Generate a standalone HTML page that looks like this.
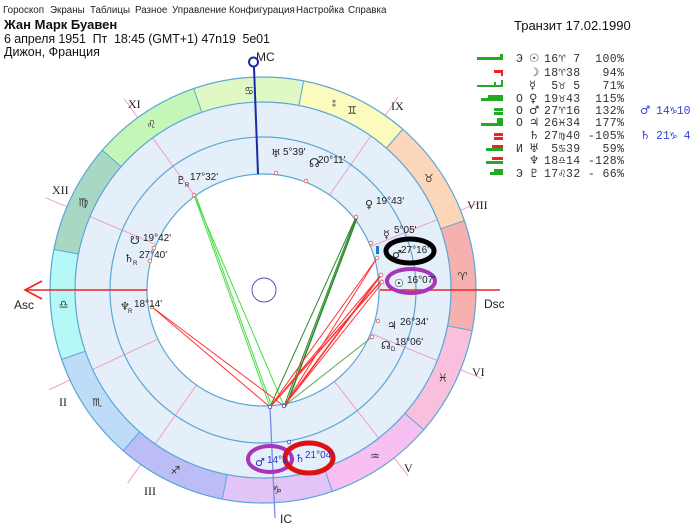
<!DOCTYPE html>
<html><head><meta charset="utf-8"><style>
html,body{margin:0;padding:0;background:#fff;width:700px;height:527px;overflow:hidden}
svg{display:block}
text{font-family:"Liberation Sans","DejaVu Sans",sans-serif;white-space:pre}
text.g,.g text{font-family:"DejaVu Sans",sans-serif}
.m text{font-family:"Liberation Mono","DejaVu Sans Mono",monospace;font-size:11.5px}
.m text.g{font-family:"DejaVu Sans",sans-serif}
.pl{font-size:10px;fill:#222}
text.rn{font-family:"Liberation Serif",serif;font-size:12px;fill:#222}
</style></head><body>
<svg width="700" height="527" viewBox="0 0 700 527" xmlns="http://www.w3.org/2000/svg" xml:space="preserve">
<g font-size="9.8" fill="#222">
<text x="3" y="13">Гороскоп</text><text x="50" y="13">Экраны</text><text x="90" y="13">Таблицы</text><text x="135" y="13">Разное</text><text x="172" y="13">Управление</text><text x="229" y="13">Конфигурация</text><text x="296" y="13">Настройка</text><text x="348" y="13">Справка</text>
</g>
<text x="4" y="29" font-size="13" font-weight="bold" fill="#111">Жан Марк Буавен</text>
<text x="4" y="43" font-size="12.5" fill="#111" textLength="266" lengthAdjust="spacing">6 апреля 1951  Пт  18:45 (GMT+1) 47n19  5e01</text>
<text x="4" y="56" font-size="12.5" fill="#111">Дижон, Франция</text>
<text x="514" y="30" font-size="13" fill="#111">Транзит 17.02.1990</text>

<g stroke="#f0a0c8" stroke-width="1" transform="translate(263,290)">
<line x1="116" y1="0" x2="236" y2="0" transform="rotate(-157)"/>
<line x1="116" y1="0" x2="236" y2="0" transform="rotate(-126)"/>
<line x1="116" y1="0" x2="236" y2="0" transform="rotate(-55)"/>
<line x1="116" y1="0" x2="236" y2="0" transform="rotate(-22)"/>
<line x1="116" y1="0" x2="236" y2="0" transform="rotate(22)"/>
<line x1="116" y1="0" x2="236" y2="0" transform="rotate(52)"/>
<line x1="116" y1="0" x2="236" y2="0" transform="rotate(125)"/>
<line x1="116" y1="0" x2="236" y2="0" transform="rotate(155)"/>
</g>
<circle cx="263" cy="290" r="152" fill="none" stroke="#e0ecf8" stroke-width="72" stroke-opacity="0.85"/>
<g stroke="#f0a0c8" stroke-width="1" transform="translate(263,290)">
<line x1="116" y1="0" x2="188" y2="0" transform="rotate(-157)"/>
<line x1="116" y1="0" x2="188" y2="0" transform="rotate(-126)"/>
<line x1="116" y1="0" x2="188" y2="0" transform="rotate(-55)"/>
<line x1="116" y1="0" x2="188" y2="0" transform="rotate(-22)"/>
<line x1="116" y1="0" x2="188" y2="0" transform="rotate(22)"/>
<line x1="116" y1="0" x2="188" y2="0" transform="rotate(52)"/>
<line x1="116" y1="0" x2="188" y2="0" transform="rotate(125)"/>
<line x1="116" y1="0" x2="188" y2="0" transform="rotate(155)"/>
</g>
<g transform="translate(263,290) scale(1,-1) rotate(-11)" fill="none" stroke-width="25">
<circle r="200.5" stroke="#f6b0ae" stroke-dasharray="104.98 1155" stroke-dashoffset="0"/>
<circle r="200.5" stroke="#fcd6b8" stroke-dasharray="104.98 1155" stroke-dashoffset="-104.98"/>
<circle r="200.5" stroke="#fafbbd" stroke-dasharray="104.98 1155" stroke-dashoffset="-209.96"/>
<circle r="200.5" stroke="#e0f8c4" stroke-dasharray="104.98 1155" stroke-dashoffset="-314.94"/>
<circle r="200.5" stroke="#c4f6b8" stroke-dasharray="104.98 1155" stroke-dashoffset="-419.92"/>
<circle r="200.5" stroke="#a8d8c4" stroke-dasharray="104.98 1155" stroke-dashoffset="-524.9"/>
<circle r="200.5" stroke="#b6f8f8" stroke-dasharray="104.98 1155" stroke-dashoffset="-629.88"/>
<circle r="200.5" stroke="#bedcf8" stroke-dasharray="104.98 1155" stroke-dashoffset="-734.86"/>
<circle r="200.5" stroke="#bcbcf6" stroke-dasharray="104.98 1155" stroke-dashoffset="-839.84"/>
<circle r="200.5" stroke="#e2c4f8" stroke-dasharray="104.98 1155" stroke-dashoffset="-944.82"/>
<circle r="200.5" stroke="#f8c0f2" stroke-dasharray="104.98 1155" stroke-dashoffset="-1049.8"/>
<circle r="200.5" stroke="#f8c0dc" stroke-dasharray="104.98 1155" stroke-dashoffset="-1154.78"/>
</g>
<g stroke="#5aa6d6" stroke-width="1" transform="translate(263,290)">
<line x1="188" y1="0" x2="213" y2="0" transform="rotate(11)"/>
<line x1="188" y1="0" x2="213" y2="0" transform="rotate(-19)"/>
<line x1="188" y1="0" x2="213" y2="0" transform="rotate(-49)"/>
<line x1="188" y1="0" x2="213" y2="0" transform="rotate(-79)"/>
<line x1="188" y1="0" x2="213" y2="0" transform="rotate(-109)"/>
<line x1="188" y1="0" x2="213" y2="0" transform="rotate(-139)"/>
<line x1="188" y1="0" x2="213" y2="0" transform="rotate(-169)"/>
<line x1="188" y1="0" x2="213" y2="0" transform="rotate(161)"/>
<line x1="188" y1="0" x2="213" y2="0" transform="rotate(131)"/>
<line x1="188" y1="0" x2="213" y2="0" transform="rotate(101)"/>
<line x1="188" y1="0" x2="213" y2="0" transform="rotate(71)"/>
<line x1="188" y1="0" x2="213" y2="0" transform="rotate(41)"/>
</g>
<g fill="none" stroke="#5aa6d6" stroke-width="1.2">
<circle cx="263" cy="290" r="213"/>
<circle cx="263" cy="290" r="188"/>
<circle cx="263" cy="290" r="153"/>
<circle cx="263" cy="290" r="116" fill="#fff"/>
</g>
<g class="g" font-size="11" fill="#333" text-anchor="middle">
<text x="462.5" y="280">♈</text><text x="428.8" y="182">♉</text><text x="352" y="114">♊</text>
<text x="249" y="94.5">♋</text><text x="151.2" y="128">♌</text><text x="83.2" y="206">♍</text>
<text x="63.5" y="308">♎</text><text x="97.2" y="405.8">♏</text><text x="175.3" y="473.8">♐</text>
<text x="277" y="493.5">♑</text><text x="374.8" y="459.8">♒</text><text x="442.8" y="381.6">♓</text>
<text x="334" y="107" font-size="8">⁑</text>
</g>
<text class="rn" x="128" y="108">XI</text><text class="rn" x="391" y="110">IX</text>
<text class="rn" x="52" y="194">XII</text><text class="rn" x="467" y="209">VIII</text>
<text class="rn" x="59" y="406">II</text><text class="rn" x="472" y="376">VI</text>
<text class="rn" x="144" y="495">III</text><text class="rn" x="404" y="472">V</text>
<text x="14" y="309" font-size="12" fill="#222">Asc</text>
<text x="484" y="308" font-size="12" fill="#222">Dsc</text>
<text x="256" y="61" font-size="12" fill="#222">MC</text>
<text x="280" y="523" font-size="12" fill="#222">IC</text>
<g stroke="#ee2222" stroke-width="1.6" fill="none">
<line x1="25" y1="290" x2="147" y2="290"/>
<polyline points="42,281 25,290 42,299"/>
<line x1="380" y1="290" x2="500" y2="290"/>
</g>
<line x1="254" y1="67" x2="258" y2="174" stroke="#1a2aa8" stroke-width="2"/>
<circle cx="253.5" cy="62" r="4.5" fill="#fff" stroke="#1a2aa8" stroke-width="2"/>
<line x1="270" y1="407" x2="275" y2="518" stroke="#7a8ae8" stroke-width="1.3"/>
<g stroke-width="1" fill="none">
<g stroke="#44dd44"><line x1="194" y1="195" x2="270" y2="407"/><line x1="194" y1="195" x2="284" y2="406"/><line x1="196" y1="196" x2="272" y2="407"/></g>
<g stroke="#2a8a2a"><line x1="356" y1="217" x2="270" y2="407"/><line x1="356" y1="217" x2="284" y2="406"/><line x1="357" y1="218" x2="286" y2="406" stroke-width="1.6"/><line x1="372" y1="337" x2="284" y2="406" stroke="#55aa55"/></g>
<g stroke="#ff3333"><line x1="377" y1="258" x2="270" y2="407"/><line x1="377" y1="258" x2="284" y2="406"/>
<line x1="381" y1="275" x2="270" y2="407"/><line x1="381" y1="275" x2="284" y2="406" stroke-width="1.6"/>
<line x1="382" y1="280" x2="270" y2="407" stroke-width="1.5"/><line x1="382" y1="283" x2="284" y2="406"/>
<line x1="152" y1="307" x2="270" y2="407"/><line x1="152" y1="307" x2="284" y2="406"/></g>
</g>
<circle cx="264" cy="290" r="12" fill="none" stroke="#5555bb" stroke-width="1"/>
<g fill="#fff" stroke="#ee5555" stroke-width="0.8">
<circle cx="194" cy="195" r="1.8"/><circle cx="356" cy="217" r="1.8"/><circle cx="377" cy="258" r="1.8"/><circle cx="381" cy="275" r="1.8"/><circle cx="382" cy="282" r="1.8"/><circle cx="378" cy="321" r="1.8"/><circle cx="372" cy="337" r="1.8"/><circle cx="152" cy="307" r="1.8"/><circle cx="154" cy="248" r="1.8"/><circle cx="150" cy="261" r="1.8"/><circle cx="276" cy="173" r="1.8"/><circle cx="306" cy="181" r="1.8"/><circle cx="371" cy="243" r="1.8"/>
</g>
<g fill="#fff" stroke="#3344cc" stroke-width="0.8"><circle cx="270" cy="407" r="1.8"/><circle cx="284" cy="406" r="1.8"/><circle cx="289" cy="442" r="1.8"/></g>
<rect x="376" y="246" width="3" height="8" fill="#1a7ad0"/>
<ellipse cx="410" cy="251" rx="24" ry="12" fill="none" stroke="#000" stroke-width="5"/>
<ellipse cx="411" cy="281" rx="24" ry="12" fill="none" stroke="#aa33bb" stroke-width="4"/>
<ellipse cx="270" cy="459" rx="22" ry="13" fill="none" stroke="#aa33bb" stroke-width="4"/>
<ellipse cx="309" cy="458" rx="24" ry="15" fill="none" stroke="#dd1111" stroke-width="5"/>
<g class="pl">
<text x="271" y="157" class="g" font-size="11">♅</text><text x="283" y="155">5°39'</text>
<text x="309" y="167" class="g" font-size="12" font-weight="bold">☊</text><text x="318" y="163">20°11'</text>
<text x="365" y="208" class="g" font-size="11">♀</text><text x="376" y="204">19°43'</text>
<text x="383" y="238" class="g" font-size="11">☿</text><text x="394" y="233">5°05'</text>
<text x="392" y="258" class="g" font-size="11">♂</text><text x="401" y="253">27°16'</text>
<text x="394" y="287" class="g" font-size="11">☉</text><text x="407" y="283">16°07'</text>
<text x="387" y="329" class="g" font-size="11">♃</text><text x="400" y="325">26°34'</text>
<text x="381" y="349" class="g" font-size="11">☊</text><text x="391" y="351" font-size="6">D</text><text x="395" y="345">18°06'</text>
<text x="176" y="184" class="g" font-size="11">♇</text><text x="185" y="187" font-size="6">R</text><text x="190" y="180">17°32'</text>
<text x="130" y="244" class="g" font-size="11">☋</text><text x="143" y="241">19°42'</text>
<text x="124" y="262" class="g" font-size="11">♄</text><text x="133" y="265" font-size="6">R</text><text x="139" y="258">27°40'</text>
<text x="120" y="310" class="g" font-size="11">♆</text><text x="128" y="313" font-size="6">R</text><text x="134" y="307">18°14'</text>
</g>
<g class="pl" style="fill:#2233cc">
<text x="255" y="466" class="g" font-size="11">♂</text><text x="267" y="463">14°1</text>
<text x="295" y="462" class="g" font-size="11">♄</text><text x="305" y="458">21°04'</text>
</g>
<g>
<rect x="477" y="57" width="26" height="3" fill="#22aa22"/><rect x="500" y="54" width="3" height="4" fill="#22aa22"/>
<rect x="494" y="70" width="9" height="3" fill="#ee2222"/><rect x="501" y="72" width="2" height="4" fill="#ee2222"/>
<rect x="477" y="85" width="26" height="2" fill="#22aa22"/><rect x="501" y="80" width="2" height="5" fill="#22aa22"/><rect x="494" y="82" width="2" height="3" fill="#22aa22"/>
<rect x="481" y="98" width="22" height="3" fill="#22aa22"/><rect x="488" y="95" width="15" height="3" fill="#22aa22"/>
<rect x="494" y="108" width="9" height="3" fill="#22aa22"/><rect x="494" y="112" width="9" height="3" fill="#22aa22"/>
<rect x="481" y="123" width="22" height="3" fill="#22aa22"/><rect x="497" y="118" width="6" height="5" fill="#22aa22"/>
<rect x="494" y="133" width="9" height="3" fill="#ee2222"/><rect x="494" y="137" width="9" height="3" fill="#ee2222"/>
<rect x="492" y="145" width="11" height="3" fill="#ee2222"/><rect x="486" y="148" width="17" height="3" fill="#22aa22"/>
<rect x="492" y="157" width="11" height="3" fill="#ee2222"/><rect x="486" y="161" width="17" height="3" fill="#22aa22"/>
<rect x="490" y="172" width="13" height="3" fill="#22aa22"/><rect x="494" y="169" width="9" height="3" fill="#22aa22"/>
</g>
<g class="m" fill="#333">
<text x="516" y="62">Э</text><text x="529" y="62" class="g" font-size="10">☉</text><text x="544" y="62" textLength="80">16♈ 7  100%</text>
<text x="529" y="76" class="g" font-size="10">☽</text><text x="544" y="76" textLength="80">18♈38   94%</text>
<text x="529" y="89" class="g" font-size="10">☿</text><text x="544" y="89" textLength="80"> 5♉ 5   71%</text>
<text x="516" y="102">O</text><text x="529" y="102" class="g" font-size="10">♀</text><text x="544" y="102" textLength="80">19♉43  115%</text>
<text x="516" y="114">O</text><text x="529" y="114" class="g" font-size="10">♂</text><text x="544" y="114" textLength="80">27♈16  132%</text>
<text x="516" y="126">O</text><text x="529" y="126" class="g" font-size="10">♃</text><text x="544" y="126" textLength="80">26♓34  177%</text>
<text x="529" y="139" class="g" font-size="10">♄</text><text x="544" y="139" textLength="80">27♍40 -105%</text>
<text x="516" y="152">И</text><text x="529" y="152" class="g" font-size="10">♅</text><text x="544" y="152" textLength="80"> 5♋39   59%</text>
<text x="529" y="164" class="g" font-size="10">♆</text><text x="544" y="164" textLength="80">18♎14 -128%</text>
<text x="516" y="177">Э</text><text x="529" y="177" class="g" font-size="10">♇</text><text x="544" y="177" textLength="80">17♌32 - 66%</text>
</g>
<g class="m" fill="#3344dd">
<text x="640" y="114" class="g" font-size="10">♂</text><text x="656" y="114">14♑10</text>
<text x="640" y="139" class="g" font-size="10">♄</text><text x="656" y="139">21♑ 4</text>
</g>
</svg>
</body></html>
